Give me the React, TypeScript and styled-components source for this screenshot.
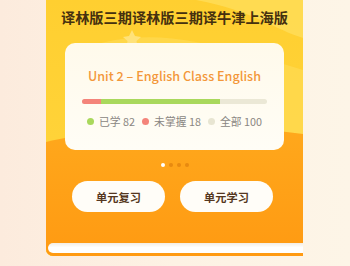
import React from "react";
import styled, { createGlobalStyle } from "styled-components";

const Global = createGlobalStyle`
  html, body { margin: 0; padding: 0; }
  body {
    width: 350px;
    height: 266px;
    overflow: hidden;
    background: linear-gradient(90deg, #fcebdd 0%, #fdf2e4 50%, #fdf5e7 100%);
    font-family: "Noto Sans CJK SC", "Noto Sans", sans-serif;
  }
`;

const Page = styled.div`
  width: 350px;
  height: 266px;
  padding-left: 46px;
  box-sizing: border-box;
  display: flex;
  align-items: flex-start;
`;

const Book = styled.div`
  position: relative;
  width: 257px;
  height: 256px;
  display: flex;
  flex-direction: column;
  background: #ffd43c;
  border-radius: 0 0 0 7px;
  overflow: hidden;
  box-shadow: inset 3px 0 0 rgba(238, 170, 20, 0.35);
`;

const Backdrop = styled.svg`
  position: absolute;
  inset: 0;
  width: 257px;
  height: 256px;
  z-index: 0;
`;

const Content = styled.div`
  position: relative;
  z-index: 1;
  display: flex;
  flex-direction: column;
  align-items: center;
  flex: 1;
`;

const Title = styled.div`
  margin-top: 7px;
  line-height: 20px;
  font-size: 14.2px;
  font-weight: 700;
  color: #45300f;
  white-space: nowrap;
`;

const Card = styled.div`
  margin-top: 16px;
  width: 219px;
  height: 107px;
  box-sizing: border-box;
  padding: 22px 17px 0;
  border-radius: 10px;
  background: linear-gradient(180deg, #fffaeb 0%, #fffdf6 100%);
  display: flex;
  flex-direction: column;
`;

const UnitTitle = styled.div`
  text-align: center;
  line-height: 22px;
  font-size: 12.6px;
  font-weight: 500;
  color: #f3973a;
  white-space: nowrap;
`;

const Bar = styled.div`
  margin-top: 12px;
  height: 5px;
  border-radius: 3px;
  background: #ebe8d6;
  display: flex;
  overflow: hidden;
`;

const Seg = styled.div<{ $c: string }>`
  height: 100%;
  background: ${(p) => p.$c};
`;

const Legend = styled.div`
  margin-top: 9px;
  padding: 0 5px;
  display: flex;
  justify-content: space-between;
  line-height: 16px;
`;

const LegendItem = styled.div`
  display: flex;
  align-items: center;
  gap: 5px;
  font-size: 10.8px;
  color: #8a8682;
`;

const Dot = styled.span<{ $c: string }>`
  width: 7px;
  height: 7px;
  border-radius: 50%;
  background: ${(p) => p.$c};
`;

const Pager = styled.div`
  margin-top: 13px;
  display: flex;
  gap: 4px;
`;

const PagerDot = styled.span<{ $on?: boolean }>`
  width: 4px;
  height: 4px;
  border-radius: 50%;
  background: ${(p) => (p.$on ? "#ffffff" : "#e88a10")};
`;

const Buttons = styled.div`
  margin-top: 14px;
  align-self: stretch;
  padding-left: 26px;
  display: flex;
  gap: 15px;
`;

const Button = styled.button`
  width: 93px;
  height: 31px;
  border: none;
  border-radius: 16px;
  background: #fffdf8;
  font-family: "Noto Sans CJK SC", sans-serif;
  font-size: 11.2px;
  font-weight: 700;
  color: #553720;
  padding: 0;
`;

const PageStrip = styled.div`
  position: relative;
  z-index: 1;
  margin: auto 0 3px 2px;
  height: 10px;
  border-radius: 5px 0 0 5px;
  background: linear-gradient(180deg, #f3ede4 0%, #ffffff 45%, #ffffff 100%);
`;

export default function App() {
  const done = 82;
  const wrong = 18;
  const total = 100;
  return (
    <>
      <Global />
      <Page>
        <Book>
          <Backdrop viewBox="0 0 257 256">
            <defs>
              <linearGradient id="orange" x1="0" y1="0" x2="0" y2="1">
                <stop offset="0" stopColor="#ffa81c" />
                <stop offset="1" stopColor="#ff9a12" />
              </linearGradient>
              <linearGradient id="top" x1="0" y1="0" x2="0" y2="1">
                <stop offset="0" stopColor="#ffcf30" />
                <stop offset="1" stopColor="#ffd63f" />
              </linearGradient>
            </defs>
            <rect x="0" y="0" width="257" height="256" fill="url(#top)" />
            <path
              d="M150 0 C 205 10, 230 30, 257 38 L257 0 Z"
              fill="#ffdb55"
              opacity="0.9"
            />
            <path
              d="M40 48 C 70 36, 110 34, 150 42 C 190 50, 225 60, 257 70 L257 140 L40 140 Z"
              fill="#ffdc58"
              opacity="0.6"
            />
            <path
              d="M86 30 l3 6 l6 1 l-4.5 4 l1 6 l-5.5 -3 l-5.5 3 l1 -6 l-4.5 -4 l6 -1 Z"
              fill="#ffe27a"
            />
            <path
              d="M0 142 C 60 128, 170 122, 257 134 L257 256 L0 256 Z"
              fill="url(#orange)"
            />
          </Backdrop>
          <Content>
            <Title>译林版三期译林版三期译牛津上海版</Title>
            <Card>
              <UnitTitle>Unit 2 – English Class English</UnitTitle>
              <Bar>
                <Seg $c="#f4847a" style={{ width: "10%" }} />
                <Seg $c="#a9d85c" style={{ width: `${((done - wrong) / total) * 100 + 0.8}%` }} />
              </Bar>
              <Legend>
                <LegendItem>
                  <Dot $c="#a9d85c" />
                  已学 {done}
                </LegendItem>
                <LegendItem>
                  <Dot $c="#f4847a" />
                  未掌握 {wrong}
                </LegendItem>
                <LegendItem>
                  <Dot $c="#e8e5d2" />
                  全部 {total}
                </LegendItem>
              </Legend>
            </Card>
            <Pager>
              <PagerDot $on />
              <PagerDot />
              <PagerDot />
              <PagerDot />
            </Pager>
            <Buttons>
              <Button>单元复习</Button>
              <Button>单元学习</Button>
            </Buttons>
          </Content>
          <PageStrip />
        </Book>
      </Page>
    </>
  );
}
